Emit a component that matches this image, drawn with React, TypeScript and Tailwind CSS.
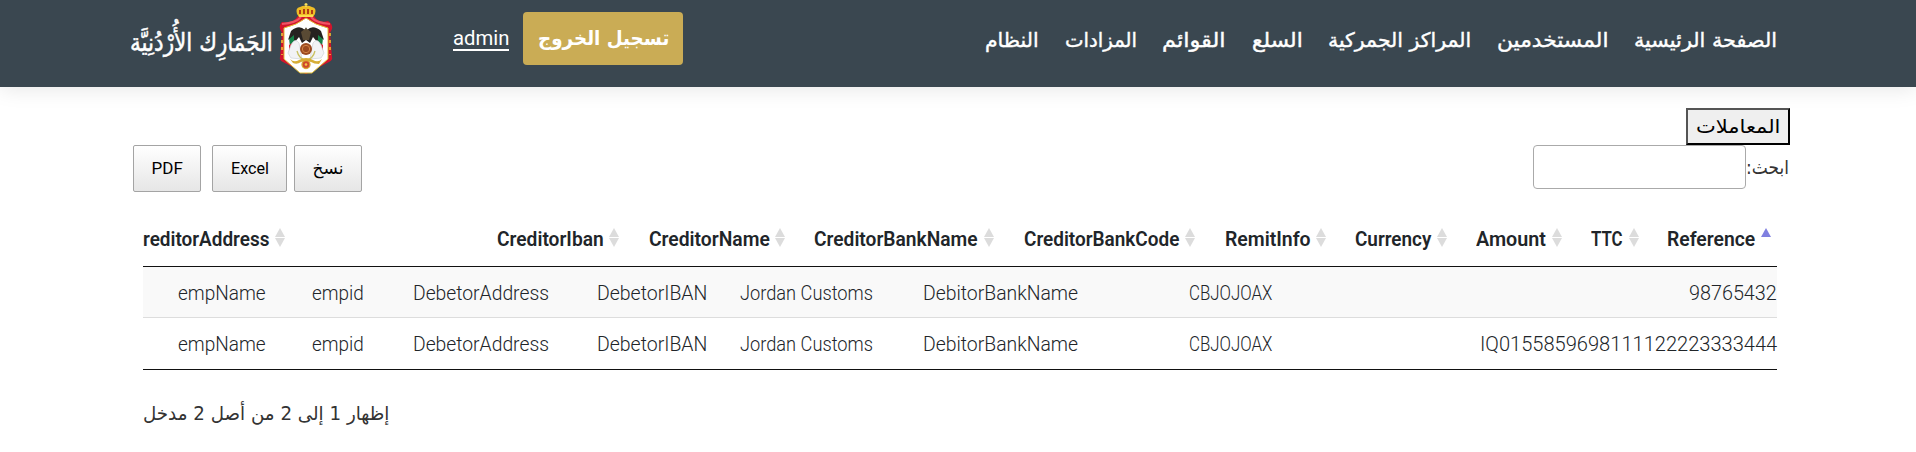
import { useLayoutEffect, useRef } from "react";

type FitProps = { text: string; w: number; rtl?: boolean; className?: string };

/* Single line of text condensed or widened to an exact width. */
function Fit({ text, w, rtl, className = "" }: FitProps) {
  const ref = useRef<HTMLSpanElement>(null);
  useLayoutEffect(() => {
    const el = ref.current;
    if (el) el.style.transform = `scaleX(${w / el.offsetWidth})`;
  }, [w, text]);
  return (
    <span className={`flex shrink-0 ${className}`} style={{ width: w }}>
      <span ref={ref} dir={rtl ? "rtl" : "ltr"} className="shrink-0 origin-left whitespace-nowrap">
        {text}
      </span>
    </span>
  );
}

const nav = [
  { text: "النظام", w: 54, gap: 0 },
  { text: "المزادات", w: 72, gap: 26 },
  { text: "القوائم", w: 64, gap: 25 },
  { text: "السلع", w: 51, gap: 26 },
  { text: "المراكز الجمركية", w: 143, gap: 25 },
  { text: "المستخدمين", w: 111, gap: 26 },
  { text: "الصفحة الرئيسية", w: 143, gap: 26 },
];

const columns = [
  { text: "reditorAddress", w: 126, gap: 0 },
  { text: "CreditorIban", w: 106.5, gap: 211.5 },
  { text: "CreditorName", w: 120.5, gap: 29.5 },
  { text: "CreditorBankName", w: 164, gap: 29 },
  { text: "CreditorBankCode", w: 155.5, gap: 29.5 },
  { text: "RemitInfo", w: 85.5, gap: 29.5 },
  { text: "Currency", w: 76.5, gap: 28.5 },
  { text: "Amount", w: 70, gap: 29 },
  { text: "TTC", w: 32, gap: 28.5 },
  { text: "Reference", w: 88, gap: 28.5 },
];

const shared = [
  { text: "empName", w: 87.5, gap: 34.5 },
  { text: "empid", w: 52, gap: 47 },
  { text: "DebetorAddress", w: 136, gap: 48.5 },
  { text: "DebetorIBAN", w: 110, gap: 48 },
  { text: "Jordan Customs", w: 133, gap: 33.5 },
  { text: "DebitorBankName", w: 155, gap: 50 },
  { text: "CBJOJOAX", w: 83.5, gap: 110.5 },
];

const rows = [
  { ref: "98765432", w: 88 },
  { ref: "IQ0155859698111122223333444", w: 297 },
];

function Sort({ active }: { active: boolean }) {
  return (
    <svg width="10" height="20" viewBox="0 0 10 20" className="mb-0.5 ml-1.5 shrink-0">
      <path d="M5 0 10 9H0Z" fill={active ? "#8080e0" : "#dcdcdc"} />
      {!active && <path d="M0 10H10L5 19Z" fill="#dcdcdc" />}
    </svg>
  );
}

function Emblem() {
  return (
    <svg width="54" height="72" viewBox="0 0 54 72" className="ml-1.5 shrink-0">
      <path d="M3 19Q0 22 1 26L3 30 1 54Q0 57 4 59L27 71 50 59Q54 57 53 54L51 30 53 26Q54 21 49 18Q40 21 35 13H19Q14 21 3 19Z" fill="#d3142c" />
      <path d="M27 15Q18 22 5 25V56L21 70H33L49 56V25Q36 22 27 15Z" fill="#fff" stroke="#e2bd35" strokeWidth="1" />
      <path d="M3 30 3 52M51 30 51 52" stroke="#f2c12e" strokeWidth="1.6" strokeDasharray="3 4" />
      <path d="M3 21Q17 20 22 14M51 21Q37 20 32 14" stroke="#ef5364" strokeWidth="2" fill="none" />
      <path d="M18 11Q16 5 21 4 25 2 27 3 29 2 33 4 38 5 36 11L34 14H20Z" fill="#efbd26" />
      <path d="M21 7V11M25 6V11M29 6V11M33 7V11" stroke="#a92613" strokeWidth="1.7" />
      <path d="M20 13H34M27 0V4M25.5 1.5H28.5" stroke="#ffe45c" strokeWidth="1.3" />
      <path d="M10 35 17 29 17 46 11 44Z" fill="#168248" />
      <path d="M44 35 37 29 37 46 43 44Z" fill="#168248" />
      <path d="M10 42 15 39 17 48 10 48ZM44 42 39 39 37 48 44 48Z" fill="#d71f30" />
      <path d="M26 27Q20 21 12 28L9 37 15 32 15 40 20 34 23 40 27 37 31 40 34 34 39 40 39 32 45 37 42 28Q34 21 28 27L27 24Z" fill="#262220" />
      <path d="M22 29 27 25 32 29 30 37H24Z" fill="#594a34" />
      <path d="M12 42Q16 34 20 40L23 56 12 55 9 50ZM42 42Q38 34 34 40L31 56 42 55 45 50Z" fill="#f2f3f5" stroke="#cfd4d8" strokeWidth=".7" />
      <path d="M18 48Q20 56 27 57 34 56 36 48" fill="none" stroke="#c9c060" strokeWidth="1.3" />
      <circle cx="27" cy="46" r="6" fill="#9b4a20" />
      <circle cx="27" cy="46" r="3.7" fill="none" stroke="#d48445" />
      <path d="M11 56Q15 60 20 57 27 53 34 57 39 60 43 56L40 61Q35 61 32 59 27 57 22 59 18 62 14 60Z" fill="#d7ae36" />
      <circle cx="27" cy="61.5" r="4" fill="#cf482c" stroke="#d8a933" strokeWidth="1.3" />
      <circle cx="27" cy="61.5" r="1.3" fill="#f5c54b" />
    </svg>
  );
}

const exportButton =
  "flex h-[47px] items-center justify-center rounded-[2px] border border-[#a4a4a4] bg-linear-to-b from-white to-[#e6e6e6] text-[17px] text-black";

export default function App() {
  return (
    <div className="h-[452px] w-full overflow-hidden bg-white font-['Roboto','DejaVu_Sans',sans-serif] text-[#212529]">
      <header className="flex h-[87px] items-start bg-[#3a4750] pl-[130px] text-white shadow-[0_2px_20px_rgba(0,0,0,0.1)]">
        <div className="flex shrink-0 pt-[3px]">
          <Fit
            text="الجَمَارِك الأُرْدُنِيَّة"
            w={143}
            rtl
            className="pt-[23px] font-['DejaVu_Sans',sans-serif] text-[25px] leading-[34px] [-webkit-text-stroke:0.5px_white]"
          />
          <Emblem />
        </div>
        <a className="ml-[120px] mt-[25px] h-[26px] border-b-2 border-white">
          <Fit text="admin" w={56} className="pt-px text-[21px] leading-6" />
        </a>
        <button className="ml-3.5 mt-3 flex h-[53px] w-40 shrink-0 justify-center rounded bg-[#caac55] pt-3">
          <Fit text="تسجيل الخروج" w={131} rtl className="font-['DejaVu_Sans',sans-serif] text-[20px] font-bold leading-7" />
        </button>
        <nav className="ml-[302px] flex pt-[26px]">
          {nav.map((n) => (
            <a key={n.text} className="shrink-0" style={{ marginLeft: n.gap }}>
              <Fit text={n.text} w={n.w} rtl className="font-['DejaVu_Sans',sans-serif] text-[20px] leading-7 [-webkit-text-stroke:0.4px_white]" />
            </a>
          ))}
        </nav>
      </header>

      <main className="pl-[133px]">
        <div className="flex w-[1657px] justify-end pt-[21px]">
          <button className="flex h-[37px] w-[104px] justify-center border-2 border-t-[#545454] border-r-black border-b-black border-l-[#545454] bg-[#efefef] pt-1 text-black">
            <Fit text="المعاملات" w={84} rtl className="font-['DejaVu_Sans',sans-serif] text-[19px] leading-6" />
          </button>
        </div>

        <div className="flex h-12 w-[1657px] items-start">
          <button className={`${exportButton} w-[68px]`}>
            <Fit text="PDF" w={31} />
          </button>
          <button className={`${exportButton} ml-[11px] w-[75px]`}>
            <Fit text="Excel" w={38} />
          </button>
          <button className={`${exportButton} ml-[7px] w-[68px]`}>
            <Fit text="نسخ" w={31} rtl className="font-['DejaVu_Sans',sans-serif]" />
          </button>
          <input className="ml-auto h-11 w-[213px] rounded border border-[#aaa] bg-white" />
          <Fit text="ابحث:" w={43} rtl className="mr-px pt-2.5 font-['DejaVu_Sans',sans-serif] text-[19px] leading-6 text-[#333]" />
        </div>

        <section className="ml-2.5 w-[1634px]">
          <div className="flex h-[74px] items-end border-b border-[#111] pb-[13px] text-[20px] font-semibold leading-7">
            {columns.map((c, i) => (
              <div key={c.text} className="flex shrink-0 items-center" style={{ marginLeft: c.gap }}>
                <Fit text={c.text} w={c.w} />
                <Sort active={i === columns.length - 1} />
              </div>
            ))}
          </div>
          {rows.map((r, i) => (
            <div
              key={r.ref}
              className={`flex items-start pt-3 text-[20px] font-light leading-7 ${
                i === 0 ? "h-[51px] border-b border-[#ddd] bg-[#f9f9f9]" : "h-[52px] border-b border-[#111]"
              }`}
            >
              {shared.map((s) => (
                <div key={s.text} className="shrink-0" style={{ marginLeft: s.gap }}>
                  <Fit text={s.text} w={s.w} />
                </div>
              ))}
              <div className="ml-auto">
                <Fit text={r.ref} w={r.w} />
              </div>
            </div>
          ))}
          <Fit
            text="إظهار 1 إلى 2 من أصل 2 مدخل"
            w={246}
            rtl
            className="pt-[27px] font-['DejaVu_Sans',sans-serif] text-[19px] leading-8 text-[#333]"
          />
        </section>
      </main>
    </div>
  );
}
